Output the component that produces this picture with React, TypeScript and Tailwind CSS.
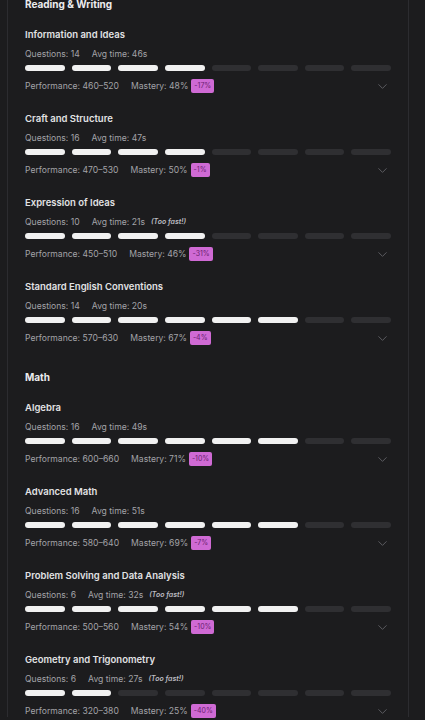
import { ChevronDown } from "lucide-react";

type Skill = {
  name: string;
  questions: number;
  avgTime: string;
  tooFast?: boolean;
  filled: number;
  performance: string;
  mastery: number;
  delta: string;
};

const sections: { title: string; skills: Skill[] }[] = [
  {
    title: "Reading & Writing",
    skills: [
      { name: "Information and Ideas", questions: 14, avgTime: "46s", filled: 4, performance: "460–520", mastery: 48, delta: "-17%" },
      { name: "Craft and Structure", questions: 16, avgTime: "47s", filled: 4, performance: "470–530", mastery: 50, delta: "-1%" },
      { name: "Expression of Ideas", questions: 10, avgTime: "21s", tooFast: true, filled: 4, performance: "450–510", mastery: 46, delta: "-31%" },
      { name: "Standard English Conventions", questions: 14, avgTime: "20s", filled: 6, performance: "570–630", mastery: 67, delta: "-4%" },
    ],
  },
  {
    title: "Math",
    skills: [
      { name: "Algebra", questions: 16, avgTime: "49s", filled: 6, performance: "600–660", mastery: 71, delta: "-10%" },
      { name: "Advanced Math", questions: 16, avgTime: "51s", filled: 6, performance: "580–640", mastery: 69, delta: "-7%" },
      { name: "Problem Solving and Data Analysis", questions: 6, avgTime: "32s", tooFast: true, filled: 6, performance: "500–560", mastery: 54, delta: "-10%" },
      { name: "Geometry and Trigonometry", questions: 6, avgTime: "27s", tooFast: true, filled: 2, performance: "320–380", mastery: 25, delta: "-40%" },
    ],
  },
];

function SkillRow({ skill }: { skill: Skill }) {
  return (
    <div className="flex flex-col">
      <h3 className="text-[9.5px] leading-[12px] font-semibold text-[#e2e2e4]">
        {skill.name}
      </h3>
      <div className="mt-[7px] flex items-center gap-[12px] text-[8.6px] leading-[12px] text-[#a3a3a8]">
        <span>Questions: {skill.questions}</span>
        <span className="flex items-center gap-[6px]">
          Avg time: {skill.avgTime}
          {skill.tooFast && (
            <span className="text-[7px] font-semibold italic text-[#bdbdc2]">
              (Too fast!)
            </span>
          )}
        </span>
      </div>
      <div className="mt-[5px] grid grid-cols-8 gap-[7px]">
        {Array.from({ length: 8 }).map((_, i) => (
          <div
            key={i}
            className={
              i < skill.filled
                ? "h-[6px] rounded-full bg-[#f1f1f1]"
                : "h-[6px] rounded-full bg-[#2f2f32]"
            }
          />
        ))}
      </div>
      <div className="mt-[8px] flex h-[14px] items-center justify-between text-[8.6px] text-[#a3a3a8]">
        <div className="flex items-center gap-[12px]">
          <span>Performance: {skill.performance}</span>
          <span className="flex items-center gap-[3px]">
            Mastery: {skill.mastery}%
            <span className="flex h-[14px] items-center rounded-[2px] bg-[#cf6ad4] px-[3px] text-[7px] text-[#6a2170]">
              {skill.delta}
            </span>
          </span>
        </div>
        <ChevronDown size={15} strokeWidth={1.4} className="mr-[1.5px] text-[#646469]" />
      </div>
    </div>
  );
}

export default function App() {
  return (
    <div className="h-screen overflow-hidden bg-[#1c1c1e] font-['Inter',sans-serif]">
      <div className="ml-[7px] h-full w-[402px] border-x border-[#2c2c30] px-[17px]">
        <div className="-mt-[3px] flex flex-col">
          {sections.map((section, si) => (
            <section key={section.title} className={si > 0 ? "mt-[25px]" : ""}>
              <h2 className="text-[10px] leading-[14px] font-bold text-[#ececee]">
                {section.title}
              </h2>
              <div className="mt-[18px] flex flex-col gap-[20px]">
                {section.skills.map((skill) => (
                  <SkillRow key={skill.name} skill={skill} />
                ))}
              </div>
            </section>
          ))}
        </div>
      </div>
    </div>
  );
}
